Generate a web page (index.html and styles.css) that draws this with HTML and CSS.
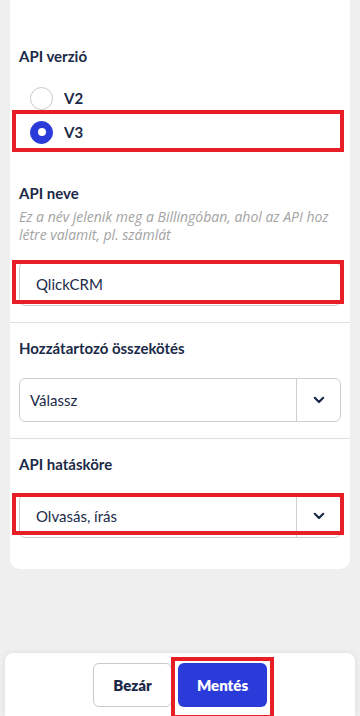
FILE: index.html
```html
<!DOCTYPE html>
<html lang="hu">
<head>
<meta charset="utf-8">
<link rel="stylesheet" href="styles.css">
</head>
<body>
<div class="page">
  <div class="card">
    <section class="section first">
      <div class="label">API verzió</div>
      <div class="radios">
        <div class="radio-row"><span class="radio"></span><span class="radio-text">V2</span></div>
        <div class="radio-row"><span class="radio checked"></span><span class="radio-text">V3</span></div>
      </div>
      <div class="label name-label">API neve</div>
      <div class="help">Ez a név jelenik meg a Billingóban, ahol az API hoz létre valamit, pl. számlát</div>
      <div class="input hl-pad">QlickCRM</div>
    </section>
    <section class="section">
      <div class="label">Hozzátartozó összekötés</div>
      <div class="select">
        <span class="select-value">Válassz</span>
        <span class="select-btn"><svg width="12" height="8" viewBox="0 0 12 8"><path d="M1.8 1.8 L6 6 L10.2 1.8" fill="none" stroke="#1b2a47" stroke-width="2.2" stroke-linecap="round" stroke-linejoin="round"/></svg></span>
      </div>
    </section>
    <section class="section last">
      <div class="label">API hatásköre</div>
      <div class="select">
        <span class="select-value hl-pad">Olvasás, írás</span>
        <span class="select-btn"><svg width="12" height="8" viewBox="0 0 12 8"><path d="M1.8 1.8 L6 6 L10.2 1.8" fill="none" stroke="#1b2a47" stroke-width="2.2" stroke-linecap="round" stroke-linejoin="round"/></svg></span>
      </div>
    </section>
  </div>
  <div class="footer">
    <button class="btn btn-secondary">Bezár</button>
    <button class="btn btn-primary">Mentés</button>
  </div>
</div>
<div class="mark mark-v3"></div>
<div class="mark mark-name"></div>
<div class="mark mark-scope"></div>
<div class="mark mark-save"></div>
</body>
</html>
```
FILE: styles.css
```css
html, body {
  margin: 0;
  padding: 0;
}
body {
  background: #efefef;
  font-family: Lato, "Noto Sans", sans-serif;
  color: #1b2a47;
  width: 360px;
  height: 716px;
  overflow: hidden;
  position: relative;
}
.page {
  display: flex;
  flex-direction: column;
  height: 716px;
}
.card {
  background: #fff;
  margin: 0 10px;
  border-radius: 0 0 10px 10px;
  padding-bottom: 31px;
}
.section {
  padding: 15px 9px 16px 9px;
  border-bottom: 1px solid #e0e0e0;
  display: flex;
  flex-direction: column;
}
.section.first {
  padding-top: 46px;
}
.section.last {
  border-bottom: none;
  padding-bottom: 0;
}
.label {
  font-weight: 700;
  font-size: 15px;
  line-height: 20px;
  color: #1b2a47;
}
.radios {
  display: flex;
  flex-direction: column;
  margin-top: 15px;
}
.radio-row {
  display: flex;
  align-items: center;
  height: 34px;
  padding-left: 11px;
}
.radio {
  width: 21px;
  height: 21px;
  border: 1px solid #c9c9c9;
  border-radius: 50%;
  box-sizing: content-box;
  display: flex;
  align-items: center;
  justify-content: center;
}
.radio.checked {
  background: #2a3bd9;
  border-color: #2a3bd9;
}
.radio.checked::after {
  content: "";
  width: 8px;
  height: 8px;
  border-radius: 50%;
  background: #fff;
}
.radio-text {
  margin-left: 11px;
  font-weight: 700;
  font-size: 15px;
}
.name-label {
  margin-top: 34px;
}
.help {
  margin-top: 5px;
  font-family: "Open Sans", Lato, sans-serif;
  font-style: italic;
  font-size: 14px;
  line-height: 18px;
  color: #a3a3a3;
}
.input {
  margin-top: 18px;
  height: 44px;
  box-sizing: border-box;
  border: 1px solid #cfcfcf;
  border-radius: 6px;
  display: flex;
  align-items: center;
  padding-left: 10px;
  font-size: 15px;
  color: #1b2a47;
}
.input.hl-pad {
  padding-left: 16px;
}
.select {
  margin-top: 20px;
  height: 44px;
  box-sizing: border-box;
  border: 1px solid #cfcfcf;
  border-radius: 6px;
  display: flex;
  align-items: stretch;
}
.select-value {
  flex: 1;
  display: flex;
  align-items: center;
  padding-left: 10px;
  font-size: 15px;
  color: #1b2a47;
}
.select-value.hl-pad {
  padding-left: 16px;
}
.select-btn {
  width: 43px;
  border-left: 1px solid #cfcfcf;
  display: flex;
  align-items: center;
  justify-content: center;
}
.footer {
  margin-top: auto;
  margin-left: 5px;
  margin-right: 5px;
  height: 63px;
  box-sizing: border-box;
  background: #fff;
  border-radius: 8px 8px 0 0;
  box-shadow: 0 0 6px rgba(0,0,0,0.08);
  display: flex;
  justify-content: center;
  align-items: flex-start;
  padding-top: 10px;
  gap: 6px;
}
.btn {
  height: 44px;
  border-radius: 6px;
  font-family: Lato, "Noto Sans", sans-serif;
  font-weight: 800;
  font-size: 15px;
  box-sizing: border-box;
}
.btn-secondary {
  width: 79px;
  background: #fff;
  border: 1px solid #c9c9c9;
  color: #1b2a47;
}
.btn-primary {
  width: 89px;
  background: #2a3bd9;
  border: none;
  color: #fff;
}
.mark {
  position: absolute;
  border: 4px solid #e81e26;
  box-sizing: border-box;
  pointer-events: none;
}
.mark-v3 {
  left: 12px;
  top: 110px;
  width: 332px;
  height: 42px;
}
.mark-name {
  left: 12px;
  top: 260px;
  width: 332px;
  height: 44px;
}
.mark-scope {
  left: 12px;
  top: 493px;
  width: 332px;
  height: 42px;
}
.mark-save {
  left: 171px;
  top: 657px;
  width: 103px;
  height: 62px;
}
```
